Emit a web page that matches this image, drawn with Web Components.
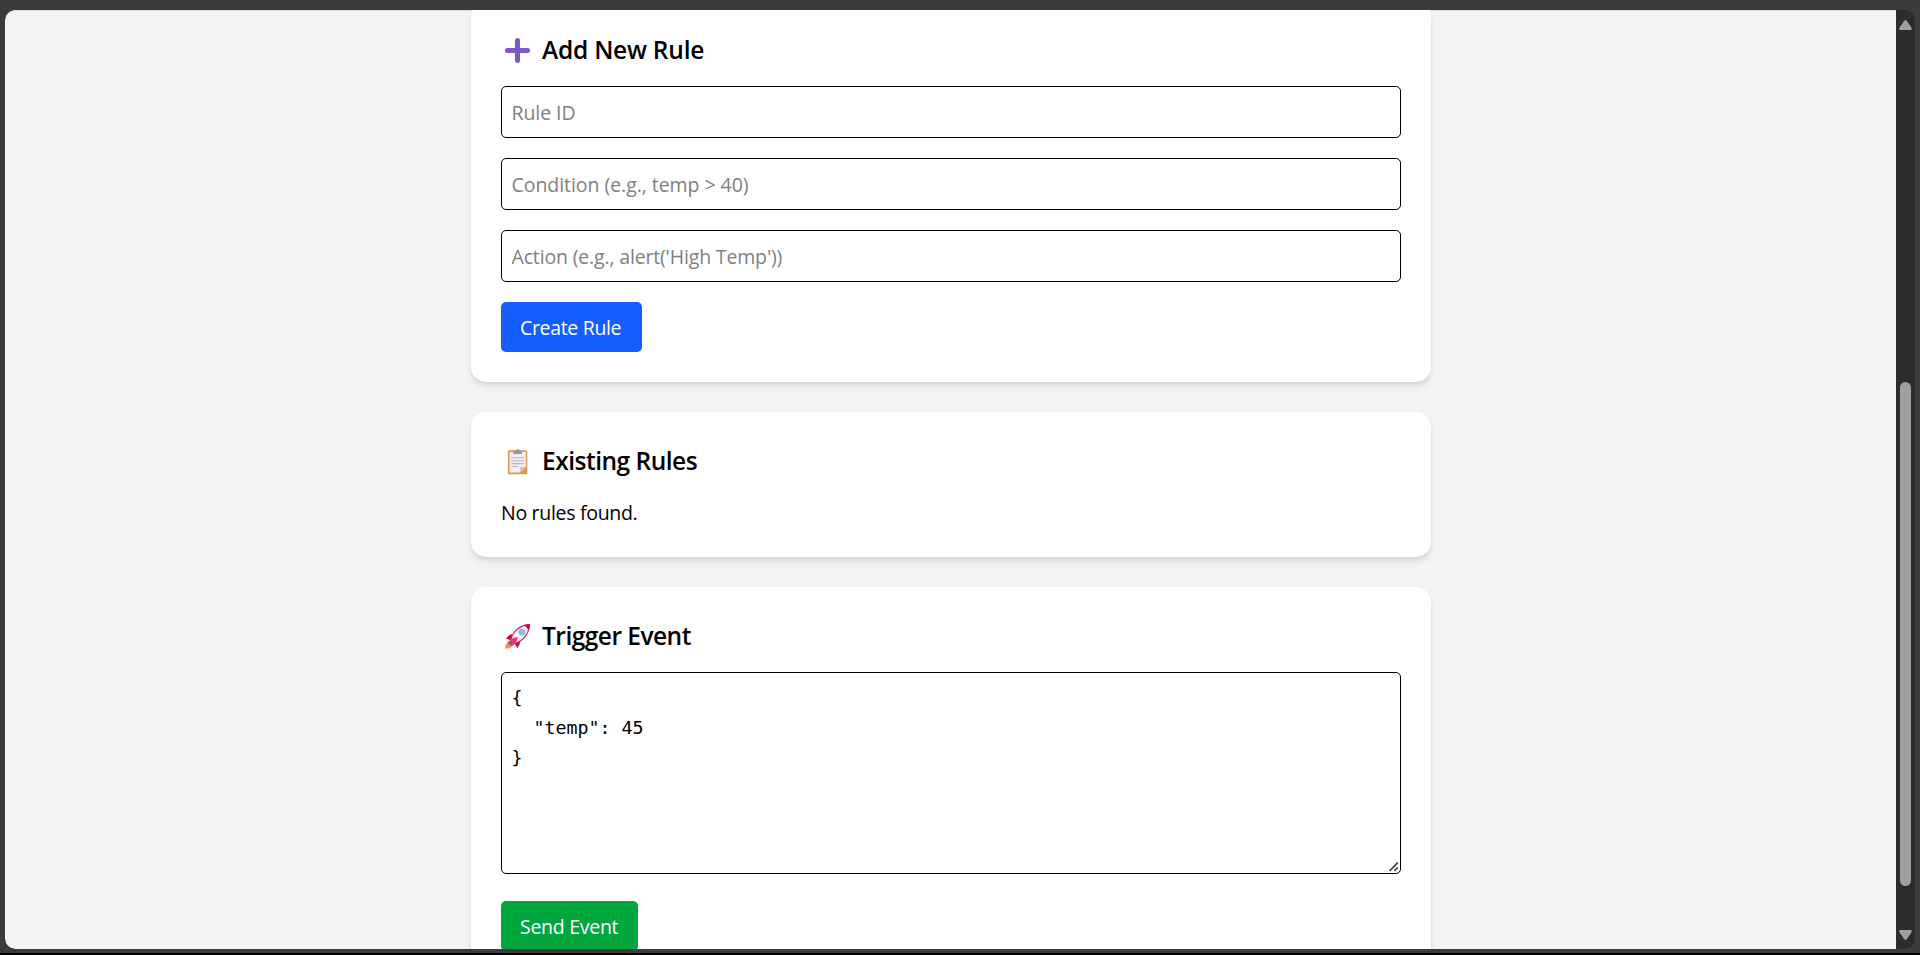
<!DOCTYPE html>
<html lang="en">
<head>
<meta charset="utf-8">
<title>Rule Engine</title>
<style>
html, body { margin: 0; height: 100%; overflow: hidden; background: #000; }
body { font: 19.5px/30px "Open Sans", "Noto Sans", sans-serif; color: #000; }
</style>
</head>
<body>
<browser-frame>
  <rule-card>
    <card-heading icon="plus" style="--track:-.23px">Add New Rule</card-heading>
    <text-field placeholder="Rule ID" style="--track:-.07px"></text-field>
    <text-field placeholder="Condition (e.g., temp &gt; 40)" style="--track:-.05px"></text-field>
    <text-field placeholder="Action (e.g., alert('High Temp'))" style="--track:-.16px"></text-field>
    <action-button style="--fill:#155dfc;--track:-.33px;--width:141px">Create Rule</action-button>
  </rule-card>
  <rule-card>
    <card-heading icon="clipboard" style="--track:-.49px">Existing Rules</card-heading>
    <p style="margin:0;letter-spacing:-.3px">No rules found.</p>
  </rule-card>
  <rule-card>
    <card-heading icon="rocket" style="--track:-.52px">Trigger Event</card-heading>
    <json-editor></json-editor>
    <action-button style="--fill:#00a63e;--track:-.28px;--width:137px">Send Event</action-button>
  </rule-card>
</browser-frame>
<script>
class Base extends HTMLElement {
  connectedCallback() {
    if (!this.shadowRoot) this.attachShadow({ mode: 'open' }).innerHTML = this.template();
  }
}

customElements.define('browser-frame', class extends Base {
  template() {
    return `<style>
      :host { display: block; box-sizing: border-box; height: 953px; padding: 10px 5px 4px; background: #3b3b3b; }
      .window { display: flex; height: 939px; border-radius: 10px; overflow: hidden; background: #2c2c2c; }
      .view { flex: 1; overflow: hidden; background: #f3f4f6; border-radius: 10px 0 0 10px; box-shadow: inset 0 1px #dcdcdd; }
      .page { width: 960px; margin: -9px 0 0 466px; display: flex; flex-direction: column; gap: 30px; }
      .bar { width: 19px; box-sizing: border-box; padding: 10px 0 9px; display: flex; flex-direction: column; align-items: center; }
      .bar svg { display: block; width: 13px; height: 10px; fill: #9f9f9f; }
      .thumb { width: 11px; height: 504px; margin-top: 352px; margin-bottom: 44px; border-radius: 6px; background: #9f9f9f; }
    </style>
    <div class="window">
      <div class="view"><div class="page"><slot></slot></div></div>
      <div class="bar">
        <svg viewBox="0 0 13 10"><path d="M5.3.8Q6.5-.6 7.7.8L12.7 8Q13.2 10 11.5 10H1.500Q-.2 10 .3 8Z"/></svg>
        <div class="thumb"></div>
        <svg viewBox="0 0 13 10"><path d="M5.3 9.200Q6.500 10.600 7.700 9.200L12.700 2Q13.200 0 11.500 0H1.500Q-.2 0 .3 2Z"/></svg>
      </div>
    </div>`;
  }
});

customElements.define('rule-card', class extends Base {
  template() {
    return `<style>
      :host { display: flex; flex-direction: column; gap: 20px; align-items: stretch; padding: 30px; border-radius: 15px;
        background: #fff; box-shadow: 0 5px 7.5px -1.25px rgb(0 0 0 / .1), 0 2.5px 5px -2.5px rgb(0 0 0 / .1); }
      ::slotted(p) { box-sizing: border-box; height: 30px; line-height: 32px; }
    </style><slot></slot>`;
  }
});

const ICONS = {
  plus: '<path d="M12.500 2.500V22.500M2.500 12.500H22.500" stroke="#7e57c2" stroke-width="5" stroke-linecap="round"/>',
  clipboard: `<rect x="2.900" y="1.200" width="19.400" height="24" rx="1.500" fill="#e39846"/>
    <path d="M4.600 3H20.800V17.500L15.200 23.500H4.600Z" fill="#f1ecf5"/>
    <path d="M15.200 23.500V19.200Q15.200 18 16.400 18H20.800Z" fill="#cdc2d5"/>
    <path d="M8.200 5V2.600Q8.200 1.600 9.400 1.600H10.700Q11 0 12.600 0T14.500 1.600H15.800Q17 1.600 17 2.600V5Z" fill="#9a9a9c"/>
    <path d="M6.300 8.800H19M6.300 11.700H19M6.300 14.600H19M6.300 17.500H13.500" stroke="#b8b5bd" stroke-width="1.100"/>`,
  rocket: `<path d="M7.600 9.800Q3.500 10.800 1 14.800L6.600 16.200ZM15.200 17.400Q15 21.300 12.300 24.300L9.200 18.800Z" fill="#ca0b4a"/>
    <path d="M4.200 17.300Q.4 19 .3 24.500Q5.500 24.600 8 21.200Z" fill="#ff8257"/>
    <path d="M5.300 18.600C6 10 12.600 1.400 24.400.6C24 12.300 15 19.400 6.800 20Z" fill="#f3eef8" stroke="#d01550" stroke-width="1.100"/>
    <path d="M18.600 1.300Q21.800.2 24.900.3Q25 3.300 23.700 6.600Q22.500 3 18.600 1.300Z" fill="#ca0b4a"/>
    <path d="M4.200 17Q7.500 13.300 12.600 12.900Q12 18 8.100 21Z" fill="#fb2f62"/>
    <path d="M3.600 16.800L8.500 21.500L7 22Q3.600 20.500 3.200 17.800Z" fill="#636466"/>
    <circle cx="17" cy="8.200" r="3" fill="#7fc1f6" stroke="#a6a9bb" stroke-width="1"/>`
};

customElements.define('card-heading', class extends Base {
  template() {
    return `<style>
      :host { display: block; }
      h2 { margin: 0; height: 35px; display: flex; align-items: center; font-size: 24.5px; line-height: 37px; font-weight: 600; letter-spacing: var(--track); white-space: nowrap; padding-top: 2px; box-sizing: border-box; }
      svg { width: 25px; height: 26px; margin: 3px 12px 0 4px; flex: none; }
    </style><h2><svg viewBox="0 0 25 26" fill="none">${ICONS[this.getAttribute('icon')]}</svg><slot></slot></h2>`;
  }
});

customElements.define('text-field', class extends Base {
  template() {
    return `<style>
      :host { display: block; }
      input { display: block; box-sizing: border-box; width: 100%; height: 52px; margin: 0; padding: 10px 9.500px; border: 1px solid #000; border-radius: 5px;
        background: #fff; font: inherit; line-height: 30px; letter-spacing: var(--track); outline: 0; }
      input::placeholder { color: #808080; opacity: 1; }
    </style><input type="text">`;
  }
  connectedCallback() {
    super.connectedCallback();
    this.shadowRoot.querySelector('input').placeholder = this.getAttribute('placeholder');
  }
});

customElements.define('action-button', class extends Base {
  template() {
    return `<style>
      :host { display: block; }
      button { display: block; box-sizing: border-box; width: var(--width); height: 50px; margin: 0; padding: 2px 0 0 19px; border: 0; border-radius: 5px; background: var(--fill);
        color: #fff; font: inherit; letter-spacing: var(--track); text-align: left; white-space: nowrap; }
    </style><button type="button"><slot></slot></button>`;
  }
});

customElements.define('json-editor', class extends Base {
  template() {
    return `<style>
      :host { display: block; position: relative; height: 202px; margin-bottom: 7px; }
      textarea { display: block; box-sizing: border-box; width: 100%; height: 202px; margin: 0; padding: 10px 9.500px; border: 1px solid #000; border-radius: 5px;
        background: #fff; color: #000; font: 18.270px/30px "DejaVu Sans Mono", monospace; resize: none; outline: 0; overflow: hidden; }
      svg { position: absolute; right: 2px; bottom: 2px; }
    </style><textarea spellcheck="false">{
  "temp": 45
}</textarea><svg width="10" height="10" viewBox="0 0 10 10" fill="none" stroke="#444" stroke-width="1.700"><path d="M.7 8.800L8.800.7M5.500 8.800L8.800 5.500"/></svg>`;
  }
});
</script>
</body>
</html>
